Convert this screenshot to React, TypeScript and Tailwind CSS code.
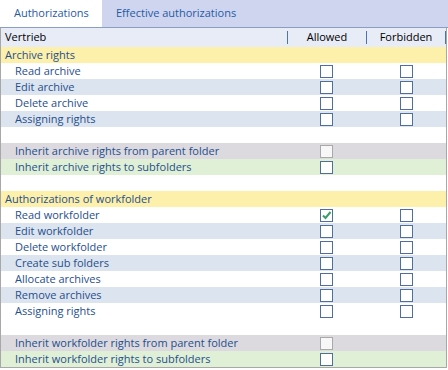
import React from "react";

type Row = {
  label?: string;
  kind: "section" | "item" | "blank" | "parent" | "sub";
  alt?: boolean;
  allowed?: boolean;
  forbidden?: boolean;
};

const rows: Row[] = [
  { label: "Archive rights", kind: "section" },
  { label: "Read archive", kind: "item" },
  { label: "Edit archive", kind: "item", alt: true },
  { label: "Delete archive", kind: "item" },
  { label: "Assigning rights", kind: "item", alt: true },
  { kind: "blank" },
  { label: "Inherit archive rights from parent folder", kind: "parent" },
  { label: "Inherit archive rights to subfolders", kind: "sub" },
  { kind: "blank" },
  { label: "Authorizations of workfolder", kind: "section" },
  { label: "Read workfolder", kind: "item", allowed: true },
  { label: "Edit workfolder", kind: "item", alt: true },
  { label: "Delete workfolder", kind: "item" },
  { label: "Create sub folders", kind: "item", alt: true },
  { label: "Allocate archives", kind: "item" },
  { label: "Remove archives", kind: "item", alt: true },
  { label: "Assigning rights", kind: "item" },
  { kind: "blank" },
  { label: "Inherit workfolder rights from parent folder", kind: "parent" },
  { label: "Inherit workfolder rights to subfolders", kind: "sub" },
];

const Box: React.FC<{ checked?: boolean; disabled?: boolean }> = ({ checked, disabled }) => (
  <div
    className={
      "w-[13px] h-[13px] border flex items-center justify-center " +
      (disabled ? "border-[#a9a9a9] bg-[#f7f7f7]" : "border-[#4f6f98] bg-white")
    }
  >
    {checked && (
      <svg width="11" height="11" viewBox="0 0 11 11">
        <path d="M2 5.5 L4.5 8 L9.5 2" fill="none" stroke="#3d9a6b" strokeWidth="2" />
      </svg>
    )}
  </div>
);

const rowBg = (r: Row) => {
  if (r.kind === "section") return "bg-[#fdf0aa]";
  if (r.kind === "parent") return "bg-[#dcdadf]";
  if (r.kind === "sub") return "bg-[#e0f0d6]";
  if (r.alt) return "bg-[#dce4ef]";
  return "bg-white";
};

const App: React.FC = () => {
  return (
    <div className="w-[448px] h-[370px] bg-white text-[11px] font-['Open_Sans',sans-serif] overflow-hidden">
      {/* tabs */}
      <div className="flex h-[28px] bg-[#cfd5ee] border-b border-[#8c9dc2]">
        <div className="w-[102px] bg-white flex items-center pl-[14px] text-[#1f5ba6]">Authorizations</div>
        <div className="flex items-center pl-[14px] text-[#1f5ba6]">Effective authorizations</div>
      </div>

      <div className="w-[447px] border-r border-b border-l border-[#a8a8a8]">
        {/* header */}
        <div className="grid grid-cols-[286px_79px_80px] h-[19px] bg-[#e8ecf7] items-center text-black">
          <div className="pl-[4px]">Vertrieb</div>
          <div className="border-l border-[#4a74ac] h-[13px] flex items-center justify-center">Allowed</div>
          <div className="border-l border-r border-[#4a74ac] h-[13px] flex items-center justify-center">Forbidden</div>
        </div>

        {rows.map((r, i) => (
          <div key={i} className={"grid grid-cols-[286px_79px_80px] h-[16px] items-center " + rowBg(r)}>
            <div
              className={
                "text-[#1f4f8c] leading-[16px] whitespace-nowrap " +
                (r.kind === "section" ? "pl-[4px]" : "pl-[14px]")
              }
            >
              {r.label}
            </div>
            <div className="flex justify-center">
              {(r.kind === "item" || r.kind === "sub") && <Box checked={r.allowed} />}
              {r.kind === "parent" && <Box disabled />}
            </div>
            <div className="flex justify-center">
              {r.kind === "item" && <Box checked={r.forbidden} />}
            </div>
          </div>
        ))}
      </div>
    </div>
  );
};

export default App;
